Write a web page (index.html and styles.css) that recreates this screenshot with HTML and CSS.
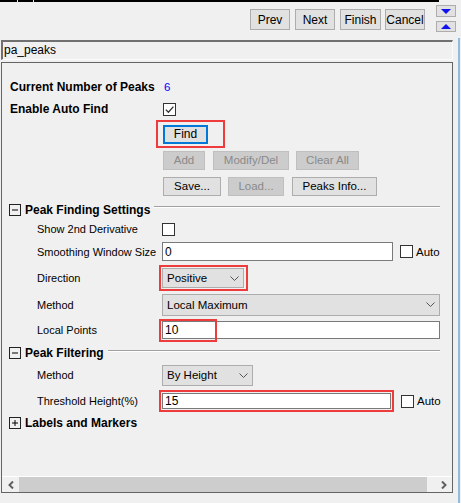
FILE: index.html
```html
<!DOCTYPE html>
<html>
<head>
<meta charset="utf-8">
<link rel="stylesheet" href="styles.css">
</head>
<body>
<div class="window">
  <div class="main">
    <div class="topbar"><span class="tick tick1"></span><span class="tick tick2"></span></div>
    <div class="navrow">
      <div class="btn nav prev">Prev</div>
      <div class="btn nav next">Next</div>
      <div class="btn nav finish">Finish</div>
      <div class="btn nav cancel">Cancel</div>
      <div class="arrows">
        <div class="arrowbtn down"><svg width="10" height="5" viewBox="0 0 10 5"><polygon points="0,0 10,0 5,5" fill="#1010f0"/></svg></div>
        <div class="arrowbtn up"><svg width="10" height="5" viewBox="0 0 10 5"><polygon points="0,5 10,5 5,0" fill="#1010f0"/></svg></div>
      </div>
    </div>
    <div class="namefield">pa_peaks</div>
    <div class="panel">
      <div class="content">
        <div class="row">
          <div class="lbl bold">Current Number of Peaks</div>
          <div class="value">6</div>
        </div>
        <div class="row">
          <div class="lbl bold">Enable Auto Find</div>
          <div class="check checked"><svg width="11" height="11" viewBox="0 0 11 11"><path d="M1.8 5.6l2.6 2.6 5-5.6" fill="none" stroke="#333" stroke-width="1.3"/></svg></div>
        </div>
        <div class="row">
          <div class="lbl"></div>
          <div class="hl hl-find"><div class="btn findbtn">Find</div></div>
        </div>
        <div class="row">
          <div class="lbl"></div>
          <div class="btn disabled b-add">Add</div>
          <div class="btn disabled b-mod">Modify/Del</div>
          <div class="btn disabled b-clear">Clear All</div>
        </div>
        <div class="row">
          <div class="lbl"></div>
          <div class="btn b-save">Save...</div>
          <div class="btn disabled b-load">Load...</div>
          <div class="btn b-info">Peaks Info...</div>
        </div>
        <div class="row hdr">
          <svg class="toggle" width="12" height="12" viewBox="0 0 12 12"><rect x="0.5" y="0.5" width="11" height="11" fill="none" stroke="#222"/><path d="M3 6h6" stroke="#000"/></svg>
          <span class="hdr-text">Peak Finding Settings</span>
          <span class="hdr-line"></span>
        </div>
        <div class="row">
          <div class="lbl">Show 2nd Derivative</div>
          <div class="check"></div>
        </div>
        <div class="row">
          <div class="lbl">Smoothing Window Size</div>
          <div class="input w-smooth">0</div>
          <div class="check auto-check"></div>
          <span class="auto">Auto</span>
        </div>
        <div class="row">
          <div class="lbl">Direction</div>
          <div class="hl hl-dir">
            <div class="select w-dir"><span>Positive</span><svg width="9" height="5" viewBox="0 0 9 5"><path d="M0.5 0.5l4 4 4-4" fill="none" stroke="#555"/></svg></div>
          </div>
        </div>
        <div class="row">
          <div class="lbl">Method</div>
          <div class="select w-method"><span>Local Maximum</span><svg width="9" height="5" viewBox="0 0 9 5"><path d="M0.5 0.5l4 4 4-4" fill="none" stroke="#555"/></svg></div>
        </div>
        <div class="row">
          <div class="lbl">Local Points</div>
          <div class="input w-local">10<span class="hl-over"></span></div>
        </div>
        <div class="row hdr">
          <svg class="toggle" width="12" height="12" viewBox="0 0 12 12"><rect x="0.5" y="0.5" width="11" height="11" fill="none" stroke="#222"/><path d="M3 6h6" stroke="#000"/></svg>
          <span class="hdr-text">Peak Filtering</span>
          <span class="hdr-line"></span>
        </div>
        <div class="row">
          <div class="lbl">Method</div>
          <div class="select w-method2"><span>By Height</span><svg width="9" height="5" viewBox="0 0 9 5"><path d="M0.5 0.5l4 4 4-4" fill="none" stroke="#555"/></svg></div>
        </div>
        <div class="row">
          <div class="lbl">Threshold Height(%)</div>
          <div class="hl hl-thr"><div class="input w-thr">15</div></div>
          <div class="check auto-check"></div>
          <span class="auto">Auto</span>
        </div>
        <div class="row hdr">
          <svg class="toggle" width="12" height="12" viewBox="0 0 12 12"><rect x="0.5" y="0.5" width="11" height="11" fill="none" stroke="#222"/><path d="M3 6h6M6 3v6" stroke="#000"/></svg>
          <span class="hdr-text">Labels and Markers</span>
        </div>
      </div>
      <div class="hscroll">
        <div class="sarrow"><svg width="6" height="8" viewBox="0 0 6 8"><path d="M5 0.5L1.5 4 5 7.5" fill="none" stroke="#606060" stroke-width="2"/></svg></div>
        <div class="thumb"></div>
        <div class="sspace"></div>
        <div class="sarrow"><svg width="6" height="8" viewBox="0 0 6 8"><path d="M1 0.5L4.5 4 1 7.5" fill="none" stroke="#606060" stroke-width="2"/></svg></div>
      </div>
    </div>
  </div>
  <div class="edge"></div>
</div>
</body>
</html>
```

FILE: styles.css
```css
body {
  margin: 0;
  background: #f0f0f0;
  font-family: "Liberation Sans", Arial, sans-serif;
  font-size: 11px;
  color: #000;
}
.window {
  display: flex;
  width: 461px;
  height: 503px;
  overflow: hidden;
}
.main {
  width: 458px;
  flex: none;
}
.edge {
  width: 2px;
  margin-top: 38px;
  background: #8fbde0;
}
.topbar {
  display: flex;
  width: 439px;
  height: 2px;
  background: #000;
}
.tick {
  width: 1px;
  height: 2px;
  background: #ffff3c;
}
.tick1 { margin-left: 17px; }
.tick2 { margin-left: 15px; }

.navrow {
  display: flex;
  align-items: flex-start;
  height: 38px;
  padding-left: 250px;
}
.btn {
  box-sizing: border-box;
  flex: none;
  height: 19px;
  border: 1px solid #adadad;
  background: #e1e1e1;
  display: flex;
  align-items: center;
  justify-content: center;
  font-size: 11.5px;
  white-space: nowrap;
}
.btn.nav {
  margin-top: 7px;
  height: 21px;
  width: 40px;
  font-size: 12px;
}
.next { margin-left: 5px; }
.btn.finish { margin-left: 5px; width: 41px; }
.cancel { margin-left: 4px; }
.arrows {
  display: flex;
  flex-direction: column;
  margin-left: 11px;
  margin-top: 3px;
}
.arrowbtn {
  box-sizing: border-box;
  width: 20px;
  height: 12px;
  border: 1px solid #adadad;
  background: #e1e1e1;
  display: flex;
  align-items: center;
  justify-content: center;
}
.arrowbtn.up {
  margin-top: 4px;
  height: 11px;
}
.namefield {
  margin-left: 1px;
  width: 452px;
  height: 20px;
  box-sizing: border-box;
  border-top: 2px solid #707070;
  border-left: 2px solid #707070;
  border-right: 1px solid #fbfbfb;
  border-bottom: 1px solid #fbfbfb;
  padding-left: 1px;
  line-height: 16px;
  font-size: 12px;
}
.panel {
  margin-top: 2px;
  margin-left: 1px;
  width: 452px;
  height: 431px;
  box-sizing: border-box;
  border: 1px solid #646464;
  display: flex;
  flex-direction: column;
}
.content {
  flex: 1;
  padding-top: 13px;
  display: grid;
  grid-template-rows: 22px 22px 27px 26px 26px 21px 18px 27px 26px 27px 24px 22px 22px 30px 14px;
  align-content: start;
}
.row {
  display: flex;
  align-items: center;
}
.lbl {
  width: 160px;
  flex: none;
  box-sizing: border-box;
  padding-left: 35px;
  white-space: nowrap;
}
.lbl.bold {
  padding-left: 8px;
  font-weight: bold;
  font-size: 12px;
}
.value {
  margin-left: 2px;
  color: #0000ff;
  font-size: 11.5px;
}
.check {
  box-sizing: border-box;
  width: 13px;
  height: 13px;
  border: 1px solid #333;
  background: #fff;
  flex: none;
  display: flex;
  align-items: center;
  justify-content: center;
}
.check.checked {
  margin-left: 1px;
}
.auto-check {
  margin-left: 7px;
}
.auto {
  margin-left: 3px;
  font-size: 11.5px;
}
.input {
  position: relative;
  box-sizing: border-box;
  flex: none;
  height: 19px;
  border: 1px solid #7a7a7a;
  background: #fff;
  padding-left: 2px;
  display: flex;
  align-items: center;
  font-size: 12px;
}
.select {
  box-sizing: border-box;
  flex: none;
  border: 1px solid #adadad;
  background: #e1e1e1;
  display: flex;
  align-items: center;
  justify-content: space-between;
  padding: 0 4px 0 4px;
  font-size: 11.5px;
}
.hl {
  box-sizing: border-box;
  flex: none;
  border: 2px solid #ee3b3b;
  display: flex;
  align-items: center;
}
.hl-find {
  margin-left: -6px;
  width: 69px;
  height: 28px;
  padding-left: 5px;
  padding-top: 1px;
}
.findbtn {
  width: 45px;
  height: 19px;
  border: 2px solid #0078d7;
  font-size: 12px;
}
.b-add { margin-left: 1px; width: 42px; }
.b-mod { margin-left: 8px; width: 76px; }
.b-clear { margin-left: 7px; width: 63px; }
.b-save { margin-left: 1px; width: 58px; }
.b-load { margin-left: 7px; width: 56px; }
.b-info { margin-left: 8px; width: 85px; }
.btn.disabled {
  background: #cccccc;
  border-color: #bfbfbf;
  color: #8a8a8a;
}
.hdr {
  padding-left: 7px;
}
.hdr-text {
  margin-left: 4px;
  font-weight: bold;
  font-size: 12px;
  white-space: nowrap;
}
.hdr-line {
  flex: 1;
  height: 1px;
  background: #a0a0a0;
  border-bottom: 1px solid #ffffff;
  margin: 0 12px 5px 4px;
}
.w-smooth { width: 231px; }
.hl-dir {
  margin-left: -3px;
  width: 89px;
  height: 26px;
  padding-left: 1px;
}
.w-dir { width: 82px; height: 20px; }
.w-method { width: 278px; height: 22px; }
.w-local { width: 278px; height: 18px; }
.hl-over {
  position: absolute;
  left: -4px;
  top: -3px;
  width: 58px;
  height: 23px;
  box-sizing: border-box;
  border: 2px solid #ee3b3b;
}
.w-method2 { width: 91px; height: 21px; }
.hl-thr {
  margin-left: -3px;
  width: 235px;
  height: 22px;
  padding-left: 1px;
}
.w-thr { width: 229px; height: 16px; }

.hscroll {
  height: 16px;
  box-sizing: border-box;
  border-top: 1px solid #ffffff;
  display: flex;
}
.sarrow {
  width: 17px;
  flex: none;
  display: flex;
  align-items: center;
  justify-content: center;
}
.thumb {
  width: 408px;
  flex: none;
  background: #cdcdcd;
}
.sspace { flex: 1; }
```
